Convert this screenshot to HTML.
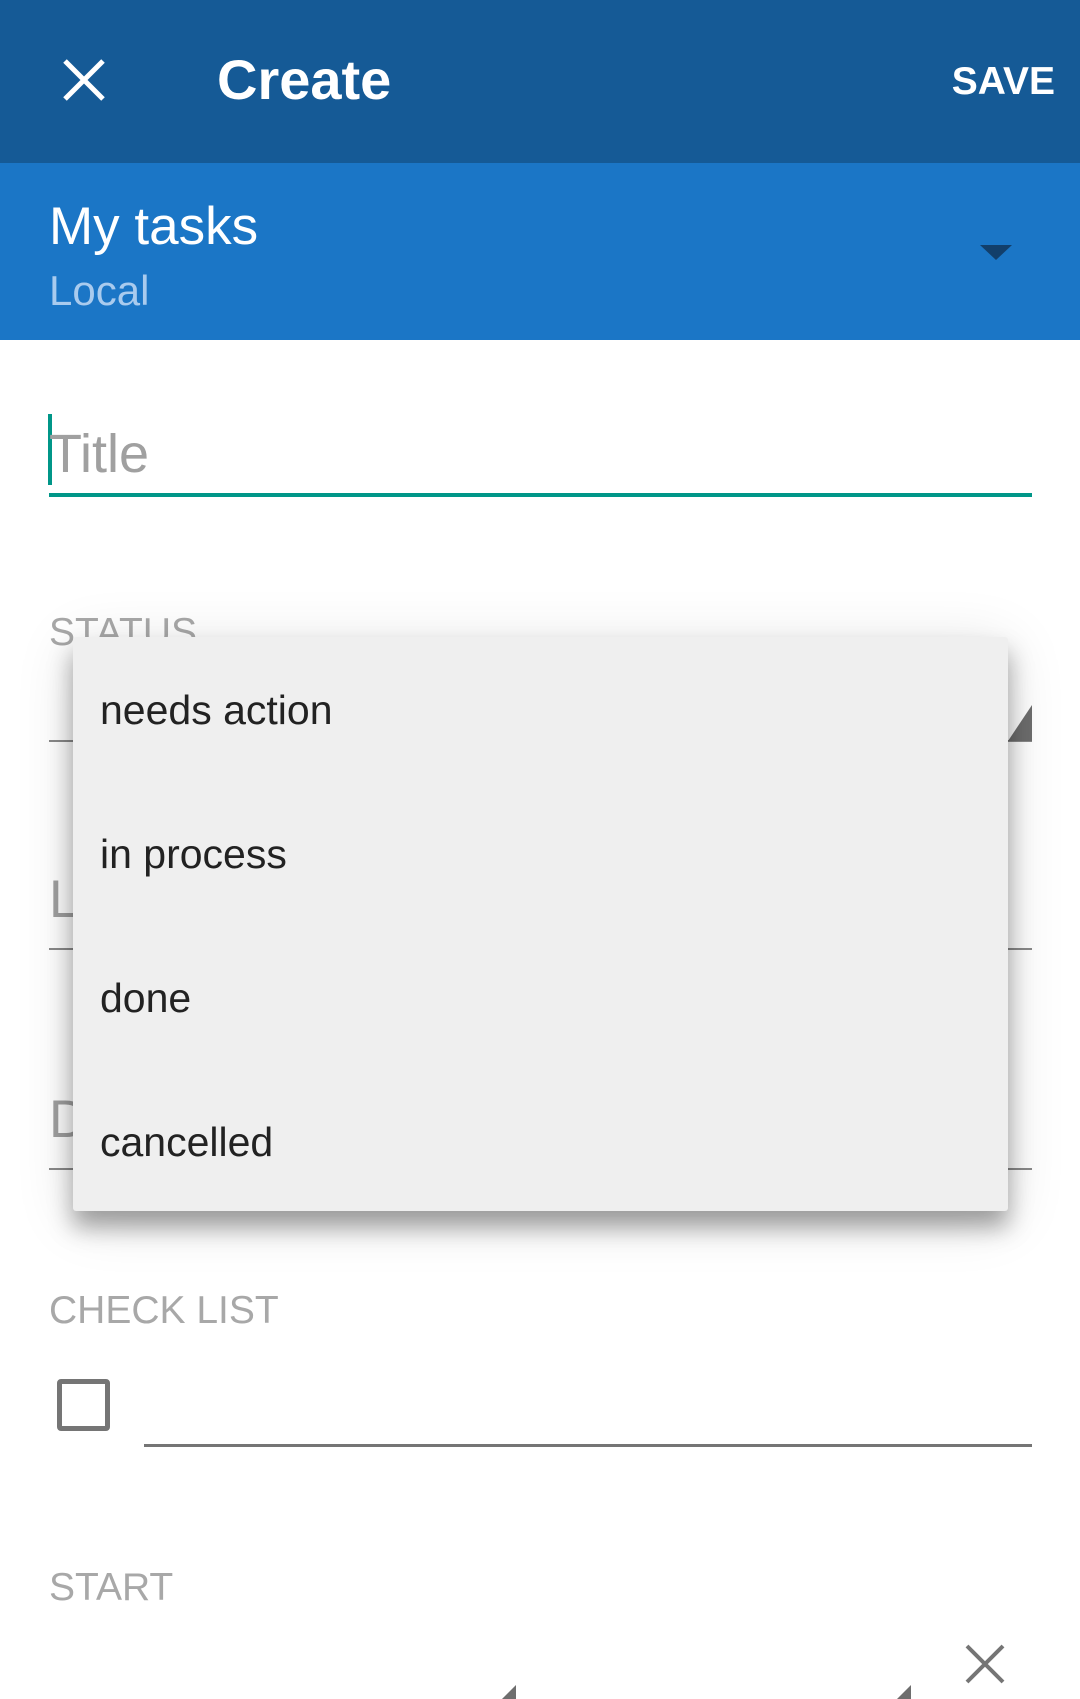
<!DOCTYPE html>
<html><head><meta charset="utf-8"><style>
*{margin:0;padding:0;box-sizing:border-box}
body{width:1080px;height:1699px;overflow:hidden;background:#fff;font-family:"Liberation Sans",sans-serif;position:relative}
.a{position:absolute}
.lbl{color:#a8a8a8;font-size:39px;left:49px;line-height:1}
.line{position:absolute;height:2px;background:#8a8a8a}
</style></head><body>
<div class="a" style="left:0;top:0;width:1080px;height:163px;background:#155a96"></div>
<svg class="a" style="left:62px;top:58px" width="44" height="44" viewBox="0 0 44 44"><path d="M3 3L41 41M41 3L3 41" stroke="#fff" stroke-width="5"/></svg>
<div class="a" style="left:217px;top:52px;color:#fff;font-size:56px;line-height:1;font-weight:bold">Create</div>
<div class="a" style="right:25px;top:62px;color:#fff;font-size:39px;line-height:1;font-weight:bold">SAVE</div>
<div class="a" style="left:0;top:163px;width:1080px;height:177px;background:#1b76c6"></div>
<div class="a" style="left:49px;top:200px;color:#fff;font-size:53px;line-height:1">My tasks</div>
<div class="a" style="left:49px;top:270px;color:#a9cbee;font-size:42px;line-height:1">Local</div>
<div class="a" style="left:980px;top:245px;width:0;height:0;border-left:16px solid transparent;border-right:16px solid transparent;border-top:15px solid #123f6b"></div>

<div class="a" style="left:48px;top:414px;width:4px;height:71px;background:#009688"></div>
<div class="a" style="left:49px;top:427px;color:#a0a0a0;font-size:54px;line-height:1">Title</div>
<div class="a" style="left:49px;top:493px;width:983px;height:4px;background:#009688"></div>

<div class="a lbl" style="top:613px">STATUS</div>
<div class="line" style="left:49px;top:740px;width:983px"></div>
<div class="a" style="left:1008px;top:705px;width:0;height:0;border-left:24px solid transparent;border-bottom:36px solid #6e6e6e"></div>
<div class="a" style="left:49px;top:873px;color:#a0a0a0;font-size:53px;line-height:1">L</div>
<div class="line" style="left:49px;top:948px;width:983px"></div>
<div class="a" style="left:49px;top:1093px;color:#a0a0a0;font-size:53px;line-height:1">D</div>
<div class="line" style="left:49px;top:1168px;width:983px"></div>

<div class="a" style="left:73px;top:637px;width:935px;height:574px;background:#efefef;border-radius:3px;box-shadow:0 16px 24px rgba(0,0,0,.35),0 8px 60px rgba(0,0,0,.12)">
<div class="a" style="left:27px;top:53px;font-size:41px;color:#222;line-height:1">needs action</div>
<div class="a" style="left:27px;top:197px;font-size:41px;color:#222;line-height:1">in process</div>
<div class="a" style="left:27px;top:341px;font-size:41px;color:#222;line-height:1">done</div>
<div class="a" style="left:27px;top:485px;font-size:41px;color:#222;line-height:1">cancelled</div>
</div>

<div class="a lbl" style="top:1291px">CHECK LIST</div>
<div class="a" style="left:57px;top:1379px;width:53px;height:52px;border:5px solid #757575;border-radius:4px"></div>
<div class="a" style="left:144px;top:1444px;width:888px;height:3px;background:#757575"></div>
<div class="a lbl" style="top:1568px">START</div>
<svg class="a" style="left:964px;top:1643px" width="42" height="42" viewBox="0 0 42 42"><path d="M3 3L39 39M39 3L3 39" stroke="#757575" stroke-width="4"/></svg>
<div class="a" style="left:502px;top:1685px;width:0;height:0;border-left:14px solid transparent;border-bottom:14px solid #6e6e6e"></div>
<div class="a" style="left:897px;top:1685px;width:0;height:0;border-left:14px solid transparent;border-bottom:14px solid #6e6e6e"></div>
</body></html>
